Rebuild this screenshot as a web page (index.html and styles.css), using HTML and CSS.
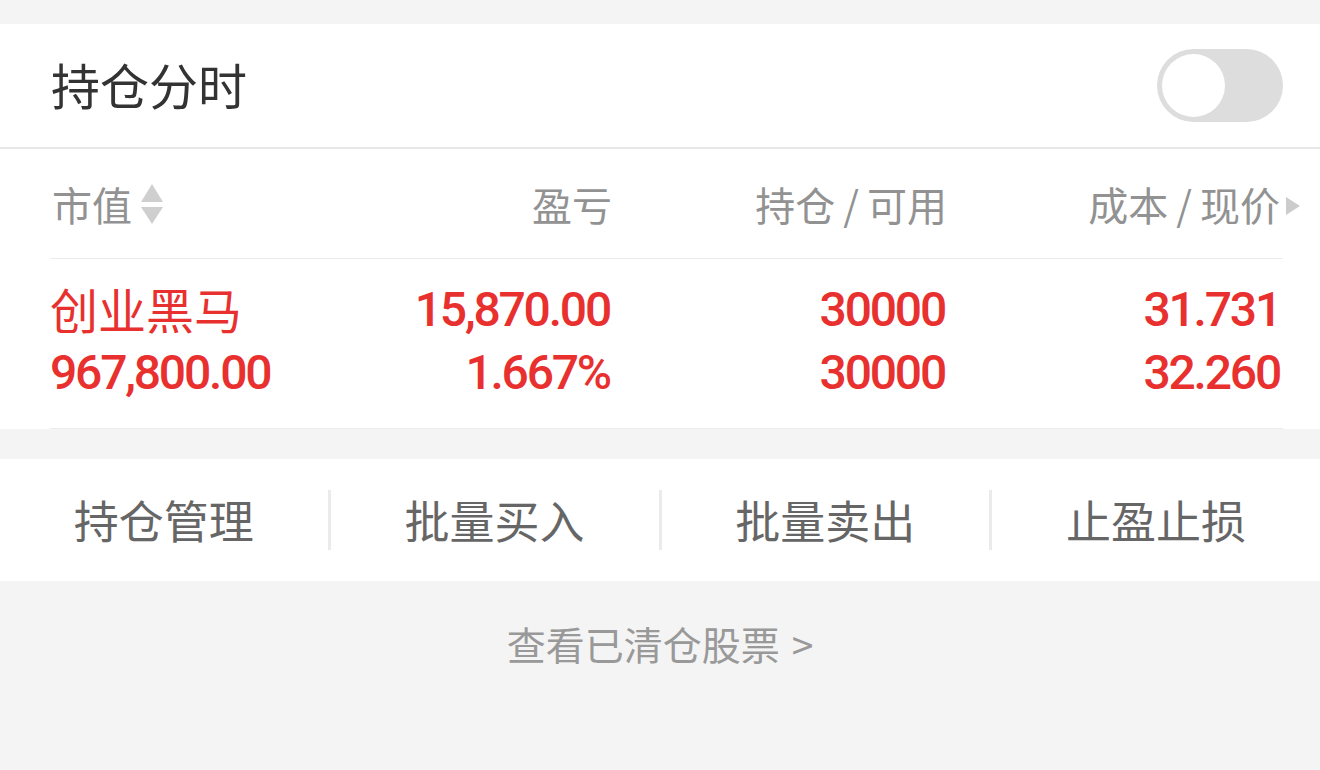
FILE: index.html
```html
<!DOCTYPE html>
<html lang="zh-CN">
<head>
<meta charset="utf-8">
<title>持仓分时</title>
<link rel="stylesheet" href="styles.css">
</head>
<body>
<div class="top-gap"></div>
<section class="card-header">
  <div class="title">持仓分时</div>
  <div class="toggle"><div class="knob"></div></div>
</section>
<section class="table">
  <div class="thead">
    <div class="th left">市值<svg class="sort" width="22" height="40" viewBox="0 0 22 40"><path d="M11 0 L22 18 L0 18 Z" fill="#cfcfcf"/><path d="M0 23 L22 23 L11 40 Z" fill="#cfcfcf"/></svg></div>
    <div class="th">盈亏</div>
    <div class="th">持仓<span class="sl">/</span>可用</div>
    <div class="th last">成本<span class="sl">/</span>现价<svg class="more" width="14" height="18" viewBox="0 0 14 18"><path d="M0 0 L14 9 L0 18 Z" fill="#cccccc"/></svg></div>
  </div>
  <div class="tbody">
    <div class="cell left"><div class="name">创业黑马</div><div class="num">967,800.00</div></div>
    <div class="cell"><div class="num">15,870.00</div><div class="num">1.667%</div></div>
    <div class="cell"><div class="num">30000</div><div class="num">30000</div></div>
    <div class="cell"><div class="num">31.731</div><div class="num">32.260</div></div>
  </div>
</section>
<div class="gap"></div>
<section class="actions">
  <div class="action">持仓管理</div>
  <div class="action">批量买入</div>
  <div class="action">批量卖出</div>
  <div class="action">止盈止损</div>
</section>
<div class="link-row"><span class="link">查看已清仓股票<span class="gt">&gt;</span></span></div>
</body>
</html>
```

FILE: styles.css
```css
* { box-sizing: border-box; }
html, body {
  margin: 0;
  padding: 0;
  background: #f4f4f4;
  font-family: "Noto Sans CJK SC", "Noto Sans", sans-serif;
  width: 1320px;
  height: 770px;
  overflow: hidden;
}
.top-gap { height: 24px; }
.card-header {
  background: #fff;
  height: 125px;
  border-bottom: 2px solid #e8e8e8;
  display: flex;
  align-items: center;
  justify-content: space-between;
  padding: 0 37px 0 51px;
}
.title {
  font-size: 49px;
  color: #333;
  line-height: 1;
  margin-top: -4px;
}
.toggle {
  width: 126px;
  height: 73px;
  border-radius: 37px;
  background: #dddddd;
  padding: 5px;
}
.knob {
  width: 63px;
  height: 63px;
  border-radius: 50%;
  background: #fff;
}
.table {
  background: #fff;
  padding: 0 37px 0 50px;
}
.thead, .tbody {
  display: grid;
  grid-template-columns: 230px 330px 335px 335px;
}
.thead {
  height: 110px;
  border-bottom: 1px solid #ececec;
  align-items: center;
}
.th {
  font-size: 40px;
  color: #929292;
  text-align: right;
  line-height: 1;
  margin-right: -2px;
}
.sl { margin: 0 8px; }
.th.left {
  text-align: left;
  padding-left: 2px;
  margin-right: 0;
  display: flex;
  align-items: center;
}
.th.last { position: relative; margin-right: 0; }
.sort { margin-left: 9px; }
.more {
  position: absolute;
  right: -20px;
  top: 13px;
}
.tbody {
  height: 170px;
  border-bottom: 1px solid #ececec;
  padding-top: 19px;
}
.cell {
  text-align: right;
  color: #e8302f;
}
.cell.left { text-align: left; }
.name {
  font-size: 48px;
  line-height: 63px;
  height: 63px;
  margin-top: -1px;
  margin-bottom: 1px;
}
.num {
  font-family: "Roboto", "Noto Sans", sans-serif;
  font-weight: 500;
  font-size: 48px;
  letter-spacing: -2.2px;
  line-height: 63px;
  height: 63px;
}
.gap { height: 30px; }
.actions {
  background: #fff;
  height: 122px;
  display: flex;
  align-items: center;
}
.action {
  flex: 1;
  text-align: center;
  font-size: 45px;
  color: #666;
  line-height: 60px;
  border-left: 3px solid #ebebeb;
}
.action:first-child { border-left: none; }
.link-row {
  text-align: center;
  padding-top: 37px;
}
.link {
  font-size: 39px;
  color: #999;
  line-height: 50px;
}
.gt { margin-left: 12px; }
```
